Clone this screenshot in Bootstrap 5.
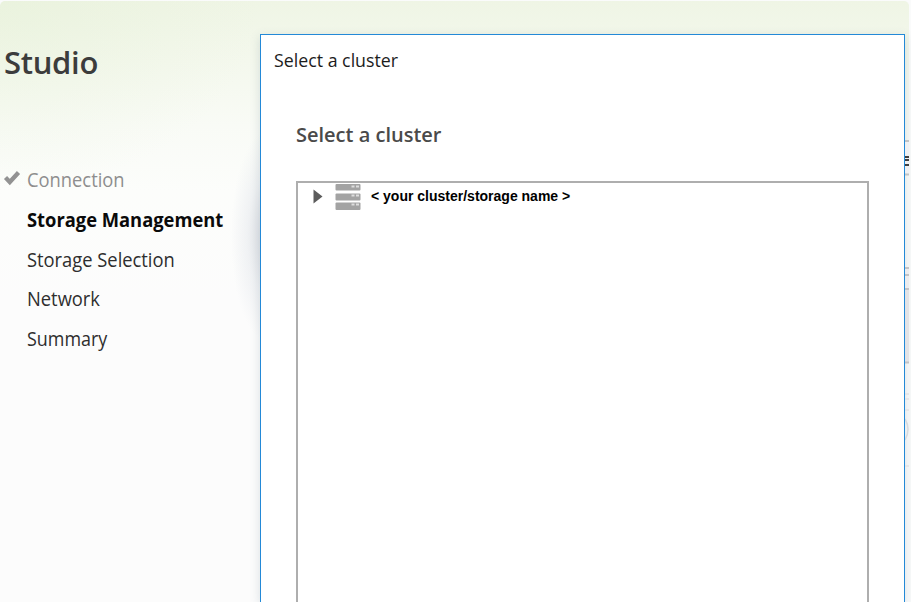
<!DOCTYPE html>
<html lang="en">
<head>
<meta charset="utf-8">
<meta name="viewport" content="width=device-width, initial-scale=1">
<title>Studio - Select a cluster</title>
<link href="https://cdn.jsdelivr.net/npm/bootstrap@5.3.0/dist/css/bootstrap.min.css" rel="stylesheet">
<style>
body{font-family:"Open Sans","Noto Sans",sans-serif;background:#fafbfb;color:#2e2e2e;height:602px}
.studio-window{width:909px;height:601px;margin-top:1px;border-radius:5px 5px 0 0;
 background:radial-gradient(ellipse 36px 105px at 267px 235px,rgba(212,215,222,.9),rgba(228,231,236,.5) 55%,rgba(255,255,255,0)),
 radial-gradient(ellipse 260px 190px at 0 0,rgba(228,240,213,.45),rgba(255,255,255,0)),
 linear-gradient(180deg,#eff5e5 0,#f4f8ed 60px,#f9fbf6 125px,#fcfdfb 190px,#fcfcfc 300px)}
.side-pane{width:260px}
.brand-title{font-size:31px;line-height:40px;font-weight:600;color:#3c3c3c;padding:41px 0 0 4px;margin-bottom:88px;letter-spacing:-.3px}
.steps li{height:39.8px;line-height:20px;font-size:19.5px;white-space:nowrap}
.step-mark{width:27px;padding-left:3px}
.s-done{color:#8e8e8e}.s-now{color:#0a0a0a;font-weight:700}
.cluster-dialog{width:645px;height:568px;margin-top:33px;border:1px solid #2389d7;border-bottom:0;box-shadow:0 3px 10px rgba(80,110,125,.2)}
.dialog-caption{font-size:19px;line-height:24px;color:#1c1c1c;padding:13px 0 0 13px}
.dialog-heading{font-size:20px;line-height:26px;font-weight:600;color:#4a4a4a;padding-left:35px;margin:50px 0 33px}
.cluster-tree{width:573px;margin-left:35px;border:2px solid #aeaeae;border-bottom:0}
.tree-label{font:bold 14px/18px "Liberation Sans",Arial,sans-serif;color:#000;margin-left:10px}
.edge-strip{width:4px}
.sp{display:inline-block;transform-origin:0 50%}
.steps .sp{transform:scaleX(.94)}
.steps .s-last .sp{transform:scaleX(.92)}
.dialog-caption .sp{transform:scaleX(.935)}
</style>
<script src="https://cdn.jsdelivr.net/npm/bootstrap@5.3.0/dist/js/bootstrap.bundle.min.js"></script>
</head>
<body class="overflow-hidden">
<div class="studio-window d-flex">
 <aside class="side-pane flex-shrink-0">
  <h1 class="brand-title">Studio</h1>
  <ul class="steps list-unstyled m-0">
   <li class="d-flex s-done"><span class="step-mark"><svg class="d-block" width="18" height="18" viewBox="0 0 18 18"><path d="M2.500 7.500 6.800 12 15.500 2.500" fill="none" stroke="#929292" stroke-width="4.300"/></svg></span><span class="sp">Connection</span></li>
   <li class="d-flex s-now"><span class="step-mark"></span><span class="sp">Storage Management</span></li>
   <li class="d-flex"><span class="step-mark"></span><span class="sp">Storage Selection</span></li>
   <li class="d-flex"><span class="step-mark"></span><span class="sp">Network</span></li>
   <li class="d-flex s-last"><span class="step-mark"></span><span class="sp">Summary</span></li>
  </ul>
 </aside>
 <main class="cluster-dialog bg-white flex-shrink-0 d-flex flex-column">
  <div class="dialog-caption"><span class="sp">Select a cluster</span></div>
  <h2 class="dialog-heading"><span class="sp">Select a cluster</span></h2>
  <div class="cluster-tree flex-grow-1">
   <div class="d-flex align-items-start">
    <svg class="flex-shrink-0" width="63" height="30" viewBox="0 0 63 30">
     <path d="M15.500 6.500V20.500L24.500 13.500Z" fill="#5c5c5c"/>
     <g fill="#a3a3a3"><rect x="37.500" y="1" width="25" height="6.500" rx="1"/><rect x="37.500" y="10.500" width="25" height="7" rx="1"/><rect x="37.500" y="19.500" width="25" height="7.500" rx="1"/></g>
     <path d="M53.500 3.500h3m1.500 0h3M53.500 12.500h3m1.500 0h3M53.500 21.500h3m1.500 0h3" stroke="#dedede" stroke-width="2"/>
    </svg>
    <span class="tree-label mt-1">&lt; your cluster/storage name &gt;</span>
   </div>
  </div>
 </main>
 <svg class="edge-strip flex-shrink-0" height="601" viewBox="0 1 4 601">
  <path d="M0 141h4M0 174.500h4" stroke="#c2c4c6" stroke-width="2"/>
  <rect y="142" width="4" height="31" fill="#f0f1f3"/>
  <path d="M0 157h4M0 160h4M0 165h4" stroke="#404040" stroke-width="2"/>
  <rect y="268" width="4" height="21" fill="#ececee"/><rect y="290" width="4" height="72" fill="#e3e3e6"/>
  <path d="M0 268h4M0 275h4M0 289h4M0 362.500h4" stroke="#c3c3c6" stroke-width="2"/>
  <path d="M0 394h4M0 399h4M0 410h4M0 466h4" stroke="#e6e6e8" stroke-width="2"/>
  <path d="M0 419Q6 429 0 440" stroke="#d7dade" fill="none" stroke-width="1.500"/>
 </svg>
</div>
</body>
</html>
